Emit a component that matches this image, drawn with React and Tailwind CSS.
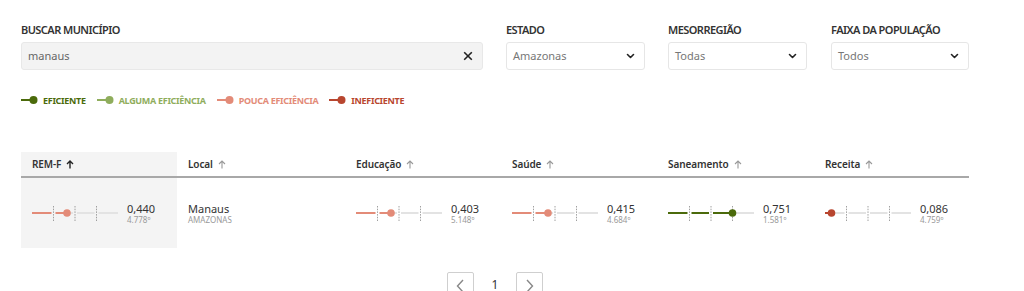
import React from "react";

const C = {
  ef: "#4b6a0b",
  alg: "#8fad5c",
  pouca: "#e38b78",
  inef: "#b8462f",
};

function Chevron() {
  return (
    <svg width="9" height="6" viewBox="0 0 9 6" fill="none">
      <path d="M1.5 1.5 L4.5 4.5 L7.5 1.5" stroke="#222" strokeWidth="1.6" strokeLinecap="round" strokeLinejoin="round" />
    </svg>
  );
}

function Label({ children }) {
  return (
    <div className="text-[11px] font-semibold text-[#333] leading-[14px] mb-[5px] tracking-[-0.55px]">{children}</div>
  );
}

function Select({ value }) {
  return (
    <div className="h-[28px] border border-[#e6e6e6] rounded-[3px] bg-white flex items-center justify-between pl-[6px] pr-[9px]">
      <span className="text-[11px] text-[#777]">{value}</span>
      <Chevron />
    </div>
  );
}

function LegendItem({ color, label }) {
  return (
    <div className="flex items-center">
      <svg width="18" height="10" viewBox="0 0 18 10">
        <line x1="0" y1="5" x2="12" y2="5" stroke={color} strokeWidth="2" />
        <circle cx="12.5" cy="5" r="4" fill={color} />
      </svg>
      <span className="ml-[4px] text-[9px] font-bold leading-none tracking-[-0.3px]" style={{ color }}>
        {label}
      </span>
    </div>
  );
}

const SEGS = [
  [0, 19.5],
  [23.5, 41],
  [45, 62.5],
  [66.5, 86],
];
const TICKS = [21.5, 43, 64.5];

function Bar({ pos, color }) {
  const parts = [];
  SEGS.forEach(([a, b], i) => {
    if (pos > a) {
      parts.push(<line key={"c" + i} x1={a} y1="12" x2={Math.min(b, pos)} y2="12" stroke={color} strokeWidth="2" />);
    }
    if (pos < b) {
      parts.push(<line key={"g" + i} x1={Math.max(a, pos)} y1="12" x2={b} y2="12" stroke="#e3e3e3" strokeWidth="2" />);
    }
  });
  return (
    <svg width="86" height="24" viewBox="0 0 86 24" className="shrink-0">
      {parts}
      {TICKS.map((t) => (
        <line key={t} x1={t} y1="5" x2={t} y2="20" stroke="#888" strokeWidth="0.8" strokeDasharray="1.5 1.2" />
      ))}
      <circle cx={pos} cy="12" r="3.8" fill={color} />
    </svg>
  );
}

function Metric({ pos, color, value, rank }) {
  return (
    <div className="flex items-center">
      <Bar pos={pos} color={color} />
      <div className="ml-[9px] flex flex-col">
        <span className="text-[11px] leading-[13px] text-[#333]">{value}</span>
        <span className="text-[8px] leading-[10px] text-[#999]">{rank}</span>
      </div>
    </div>
  );
}

function SortArrow({ dark }) {
  return (
    <svg width="8" height="9" viewBox="0 0 8 9" className="ml-[5px]" fill="none">
      <path d="M4 8.5 V1 M1 4 L4 1 L7 4" stroke={dark ? "#222" : "#999"} strokeWidth={dark ? "1.4" : "1.1"} />
    </svg>
  );
}

function Head({ children, dark, bg }) {
  return (
    <div className={`h-[24px] flex items-center pl-[11px] ${bg ? "bg-[#f4f4f4]" : ""}`}>
      <span className="text-[10px] font-semibold text-[#333] tracking-[-0.1px]">{children}</span>
      <SortArrow dark={dark} />
    </div>
  );
}

const COLS = "grid grid-cols-[156px_168px_156px_156px_157px_155px]";

export default function App() {
  return (
    <div className="w-[1024px] h-[291px] overflow-hidden bg-white" style={{ fontFamily: '"Noto Sans", "Open Sans", sans-serif' }}>
      <div className="w-[948px] ml-[21px] pt-[23px]">
        <div className="flex">
          <div className="flex flex-col w-[462px]">
            <Label>BUSCAR MUNICÍPIO</Label>
            <div className="h-[28px] bg-[#f3f3f3] border border-[#e8e8e8] rounded-[3px] flex items-center justify-between pl-[6px] pr-[9px]">
              <span className="text-[11px] text-[#666]">manaus</span>
              <svg width="10" height="10" viewBox="0 0 10 10">
                <path d="M1.2 1.2 L8.8 8.8 M8.8 1.2 L1.2 8.8" stroke="#222" strokeWidth="1.6" />
              </svg>
            </div>
          </div>
          <div className="flex flex-col w-[139px] ml-[23px]">
            <Label>ESTADO</Label>
            <Select value="Amazonas" />
          </div>
          <div className="flex flex-col w-[139px] ml-[23px]">
            <Label>MESORREGIÃO</Label>
            <Select value="Todas" />
          </div>
          <div className="flex flex-col w-[138px] ml-[24px]">
            <Label>FAIXA DA POPULAÇÃO</Label>
            <Select value="Todos" />
          </div>
        </div>

        <div className="flex items-center gap-[11px] mt-[25px] h-[10px]">
          <LegendItem color={C.ef} label="EFICIENTE" />
          <LegendItem color={C.alg} label="ALGUMA EFICIÊNCIA" />
          <LegendItem color={C.pouca} label="POUCA EFICIÊNCIA" />
          <LegendItem color={C.inef} label="INEFICIENTE" />
        </div>

        <div className="mt-[47px]">
          <div className={`${COLS} border-b-2 border-[#a8a8a8]`}>
            <Head dark bg>REM-F</Head>
            <Head>Local</Head>
            <Head>Educação</Head>
            <Head>Saúde</Head>
            <Head>Saneamento</Head>
            <Head>Receita</Head>
          </div>
          <div className={`${COLS} h-[70px] items-stretch`}>
            <div className="bg-[#f4f4f4] flex items-center pl-[11px]">
              <Metric pos={35} color={C.pouca} value="0,440" rank="4.778º" />
            </div>
            <div className="flex flex-col justify-center pl-[11px]">
              <span className="text-[11px] leading-[13px] text-[#333]">Manaus</span>
              <span className="text-[8px] leading-[10px] text-[#999]">AMAZONAS</span>
            </div>
            <div className="flex items-center pl-[11px]">
              <Metric pos={35} color={C.pouca} value="0,403" rank="5.148º" />
            </div>
            <div className="flex items-center pl-[11px]">
              <Metric pos={36} color={C.pouca} value="0,415" rank="4.684º" />
            </div>
            <div className="flex items-center pl-[11px]">
              <Metric pos={64.5} color={C.ef} value="0,751" rank="1.581º" />
            </div>
            <div className="flex items-center pl-[11px]">
              <Metric pos={6.5} color={C.inef} value="0,086" rank="4.759º" />
            </div>
          </div>
        </div>

        <div className="flex items-center justify-center mt-[24px] gap-[18px]">
          <div className="w-[27px] h-[28px] border border-[#cfcfcf] rounded-[2px] flex items-center justify-center">
            <svg width="8" height="14" viewBox="0 0 8 14" fill="none">
              <path d="M7 1 L1.5 7 L7 13" stroke="#888" strokeWidth="1.4" />
            </svg>
          </div>
          <span className="text-[12px] leading-[14px] text-[#333] -mt-[2px]">1</span>
          <div className="w-[27px] h-[28px] border border-[#cfcfcf] rounded-[2px] flex items-center justify-center">
            <svg width="8" height="14" viewBox="0 0 8 14" fill="none">
              <path d="M1 1 L6.5 7 L1 13" stroke="#888" strokeWidth="1.4" />
            </svg>
          </div>
        </div>
      </div>
    </div>
  );
}
